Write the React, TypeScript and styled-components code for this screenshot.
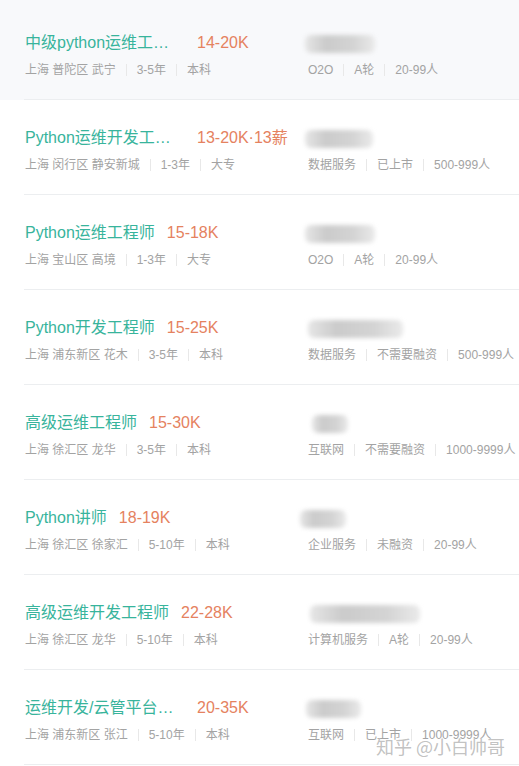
import React from 'react';
import styled, { createGlobalStyle } from 'styled-components';

const GlobalStyle = createGlobalStyle`
  body {
    margin: 0;
    background: #ffffff;
    font-family: "Liberation Sans", "Noto Sans CJK SC", sans-serif;
  }
`;

const Page = styled.div`
  position: relative;
  width: 519px;
  height: 766px;
  overflow: hidden;
  padding-top: 5px;
  box-sizing: border-box;
  background: #ffffff;
`;

const Row = styled.div<{ $active?: boolean }>`
  background: ${(p) => (p.$active ? '#f8f9fb' : '#ffffff')};
  margin-top: ${(p) => (p.$active ? '-5px' : '0')};
  padding-top: ${(p) => (p.$active ? '5px' : '0')};
`;

const Inner = styled.div`
  display: flex;
  height: 95px;
  margin-left: 24px;
  padding-left: 1px;
  box-sizing: border-box;
  border-bottom: 1px solid #eceef0;
`;

const Left = styled.div`
  width: 283px;
  display: flex;
  flex-direction: column;
  padding-top: 27px;
`;

const Right = styled.div`
  flex: 1;
  display: flex;
  flex-direction: column;
  padding-top: 27px;
`;

const TitleLine = styled.div`
  display: flex;
  align-items: center;
  height: 22px;
`;

const Title = styled.span<{ $wrap?: boolean }>`
  font-size: 16px;
  line-height: 22px;
  color: #38b49c;
  max-width: 160px;
  white-space: nowrap;
  overflow: hidden;
  text-overflow: ellipsis;
  ${(p) => (p.$wrap ? 'width: 160px;' : '')}
`;

const Salary = styled.span`
  margin-left: 12px;
  font-size: 16px;
  line-height: 22px;
  color: #e5825f;
  white-space: nowrap;
`;

const Meta = styled.div`
  display: flex;
  align-items: center;
  margin-top: 8px;
  height: 16px;
  font-size: 12px;
  line-height: 16px;
  color: #a3a3a3;
  white-space: nowrap;
`;

const Sep = styled.span`
  display: inline-block;
  width: 1px;
  height: 12px;
  margin: 0 10px;
  background: #e8e8e8;
`;

const Blur = styled.div<{ $w: number; $shift: number }>`
  width: ${(p) => p.$w}px;
  height: 18px;
  margin-top: 1px;
  margin-left: ${(p) => p.$shift}px;
  border-radius: 6px;
  background: linear-gradient(90deg, #e6e6e6 0%, #cbcbcb 30%, #d4d4d4 70%, #eaeaea 100%);
  filter: blur(2px);
`;

const Watermark = styled.div`
  position: absolute;
  right: 14px;
  bottom: 10px;
  font-size: 18px;
  line-height: 20px;
  color: rgba(160, 160, 160, 0.65);
  text-shadow: 0 0 1px rgba(255, 255, 255, 0.9);
  font-family: "Noto Sans CJK SC", sans-serif;
`;

type Job = {
  title: string;
  truncated?: boolean;
  salary: string;
  place: string;
  exp: string;
  edu: string;
  blur: number;
  shift: number;
  company: string[];
};

const jobs: Job[] = [
  { title: '中级python运维工程师', truncated: true, salary: '14-20K', place: '上海 普陀区 武宁', exp: '3-5年', edu: '本科', blur: 70, shift: -3, company: ['O2O', 'A轮', '20-99人'] },
  { title: 'Python运维开发工程师', truncated: true, salary: '13-20K·13薪', place: '上海 闵行区 静安新城', exp: '1-3年', edu: '大专', blur: 68, shift: -3, company: ['数据服务', '已上市', '500-999人'] },
  { title: 'Python运维工程师', salary: '15-18K', place: '上海 宝山区 高境', exp: '1-3年', edu: '大专', blur: 70, shift: -3, company: ['O2O', 'A轮', '20-99人'] },
  { title: 'Python开发工程师', salary: '15-25K', place: '上海 浦东新区 花木', exp: '3-5年', edu: '本科', blur: 95, shift: 0, company: ['数据服务', '不需要融资', '500-999人'] },
  { title: '高级运维工程师', salary: '15-30K', place: '上海 徐汇区 龙华', exp: '3-5年', edu: '本科', blur: 36, shift: 4, company: ['互联网', '不需要融资', '1000-9999人'] },
  { title: 'Python讲师', salary: '18-19K', place: '上海 徐汇区 徐家汇', exp: '5-10年', edu: '本科', blur: 46, shift: -8, company: ['企业服务', '未融资', '20-99人'] },
  { title: '高级运维开发工程师', salary: '22-28K', place: '上海 徐汇区 龙华', exp: '5-10年', edu: '本科', blur: 110, shift: 2, company: ['计算机服务', 'A轮', '20-99人'] },
  { title: '运维开发/云管平台开发', truncated: true, salary: '20-35K', place: '上海 浦东新区 张江', exp: '5-10年', edu: '本科', blur: 55, shift: -2, company: ['互联网', '已上市', '1000-9999人'] },
];

const App = () => {
  return (
    <>
      <GlobalStyle />
      <Page>
        {jobs.map((job, i) => (
          <Row key={i} $active={i === 0}>
            <Inner>
              <Left>
                <TitleLine>
                  <Title $wrap={job.truncated}>{job.title}</Title>
                  <Salary>{job.salary}</Salary>
                </TitleLine>
                <Meta>
                  {job.place}
                  <Sep />
                  {job.exp}
                  <Sep />
                  {job.edu}
                </Meta>
              </Left>
              <Right>
                <TitleLine>
                  <Blur $w={job.blur} $shift={job.shift} />
                </TitleLine>
                <Meta>
                  {job.company.map((c, j) => (
                    <React.Fragment key={c}>
                      {j > 0 && <Sep />}
                      {c}
                    </React.Fragment>
                  ))}
                </Meta>
              </Right>
            </Inner>
          </Row>
        ))}
        <Watermark>知乎 @小白帅哥</Watermark>
      </Page>
    </>
  );
};

export default App;
